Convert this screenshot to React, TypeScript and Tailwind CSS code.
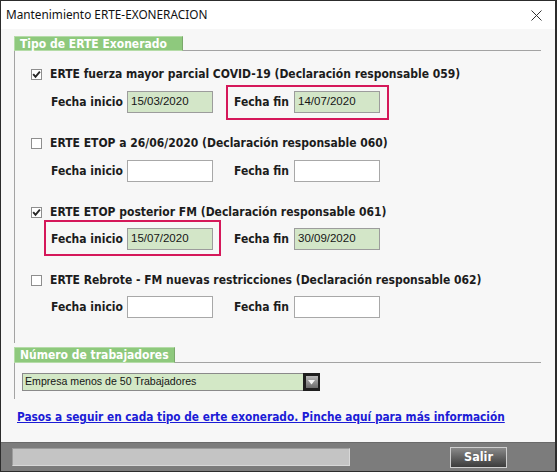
import React from "react";

const BOLD =
  "font-['DejaVu_Sans_Condensed','Liberation_Sans',sans-serif] font-bold text-[12px] text-[#1c1c1c] whitespace-nowrap";

function Check({ checked }: { checked: boolean }) {
  return (
    <span className="w-[11px] h-[11px] border border-[#8e8e8e] bg-white flex items-center justify-center shrink-0">
      {checked && (
        <svg width="9" height="9" viewBox="0 0 9 9">
          <path d="M1.2 4.1 L3.5 6.8 L7.9 1.6" stroke="#262626" strokeWidth="1.9" fill="none" />
        </svg>
      )}
    </span>
  );
}

function Field({ value }: { value?: string }) {
  return (
    <div
      className={`w-[86px] h-[22px] border flex items-center pl-[3px] text-[11.5px] font-['Liberation_Sans',sans-serif] text-[#151515] ${
        value ? "bg-[#d3e6c8] border-[#9c9c9c]" : "bg-white border-[#a8a8a8]"
      }`}
    >
      {value}
    </div>
  );
}

function Block({
  label,
  checked,
  ini,
  fin,
  hl,
  labelMt,
  fieldMt,
}: {
  label: string;
  checked: boolean;
  ini?: string;
  fin?: string;
  hl?: "ini" | "fin";
  labelMt: string;
  fieldMt: string;
}) {
  return (
    <div>
      <div className={`h-[16px] flex items-center pl-[16px] ${labelMt}`}>
        <Check checked={checked} />
        <span className={`ml-[8px] ${BOLD}`}>{label}</span>
      </div>
      <div className={`h-[22px] flex items-center pl-[36px] ${fieldMt}`}>
        <div className="relative flex items-center">
          {hl === "ini" && (
            <div className="absolute -left-[7px] -right-[8px] -top-[8px] -bottom-[6px] border-2 border-[#d5185a]" />
          )}
          <span className={`w-[76px] ${BOLD}`}>Fecha inicio</span>
          <Field value={ini} />
        </div>
        <div className="relative flex items-center ml-[21px]">
          {hl === "fin" && (
            <div className="absolute -left-[8px] -right-[9px] -top-[6px] -bottom-[7px] border-2 border-[#d5185a]" />
          )}
          <span className={`w-[60px] ${BOLD}`}>Fecha fin</span>
          <Field value={fin} />
        </div>
      </div>
    </div>
  );
}

function Tab({ text, w, h }: { text: string; w: string; h: string }) {
  return (
    <div
      className={`relative z-10 ${w} ${h} bg-[#8ec97d] border border-[#b5dca8] border-r-[#7aa86b] flex items-center pl-[5px] font-['DejaVu_Sans_Condensed','Liberation_Sans',sans-serif] font-bold text-[12px] text-white whitespace-nowrap`}
    >
      {text}
    </div>
  );
}

export default function App() {
  return (
    <div className="w-[557px] h-[472px] flex flex-col border-t border-l border-b border-r-2 border-[#2c2c2c] bg-[#f7f7f7] overflow-hidden">
      {/* title bar */}
      <div className="h-[28px] bg-white flex items-center justify-between pl-[5px] pr-[13px]">
        <span className="font-['Noto_Sans',sans-serif] text-[11.8px] text-[#111]">
          Mantenimiento ERTE-EXONERACION
        </span>
        <svg width="11" height="11" viewBox="0 0 11 11">
          <path d="M0.5 0.5 L10.5 10.5 M10.5 0.5 L0.5 10.5" stroke="#333" strokeWidth="1" />
        </svg>
      </div>

      {/* body */}
      <div className="flex-1 flex flex-col pl-[13px] pr-[14px]">
        <div className="mt-[7px]">
          <Tab text="Tipo de ERTE Exonerado" w="w-[169px]" h="h-[15px]" />
          <div className="-mt-[1px] border-t border-l border-[#a3a3a3] pb-[25px]">
            <Block
              label="ERTE fuerza mayor parcial COVID-19 (Declaración responsable 059)"
              checked
              ini="15/03/2020"
              fin="14/07/2020"
              hl="fin"
              labelMt="mt-[15px]"
              fieldMt="mt-[9px]"
            />
            <Block
              label="ERTE ETOP a 26/06/2020 (Declaración responsable 060)"
              checked={false}
              labelMt="mt-[22px]"
              fieldMt="mt-[9px]"
            />
            <Block
              label="ERTE ETOP posterior FM (Declaración responsable 061)"
              checked
              ini="15/07/2020"
              fin="30/09/2020"
              hl="ini"
              labelMt="mt-[22px]"
              fieldMt="mt-[8px]"
            />
            <Block
              label="ERTE Rebrote - FM nuevas restricciones (Declaración responsable 062)"
              checked={false}
              labelMt="mt-[22px]"
              fieldMt="mt-[8px]"
            />
          </div>
        </div>

        <div className="mt-[4px]">
          <Tab text="Número de trabajadores" w="w-[161px]" h="h-[16px]" />
          <div className="-mt-[1px] border-t border-l border-[#a3a3a3] pb-[8px] pl-[7px] pt-[10px]">
            <div className="w-[298px] h-[18px] bg-[#d3e8c6] border border-[#8a8a8a] border-r-0 flex items-center">
              <span className="flex-1 pl-[2px] font-['Liberation_Sans',sans-serif] text-[10.6px] text-[#151515] whitespace-nowrap">
                Empresa menos de 50 Trabajadores
              </span>
              <div className="w-[17px] h-[18px] bg-[#1e1e1e] flex items-center justify-center">
                <div className="w-[12px] h-[12px] bg-gradient-to-b from-[#b8b8b8] to-[#6c6c6c] flex items-center justify-center">
                  <svg width="7" height="5" viewBox="0 0 7 5">
                    <path d="M0 0 L7 0 L3.5 4.5 Z" fill="#f4f4f4" />
                  </svg>
                </div>
              </div>
            </div>
          </div>
        </div>

        <div className="mt-[11px] h-[16px] flex items-center pl-[3px]">
          <span className="font-['DejaVu_Sans_Condensed','Liberation_Sans',sans-serif] font-bold text-[11.75px] text-[#1b1bd6] underline whitespace-nowrap">
            Pasos a seguir en cada tipo de erte exonerado. Pinche aquí para más información
          </span>
        </div>
      </div>

      {/* bottom bar */}
      <div className="h-[29px] bg-[#7c7c7c] border-t border-[#6a6a6a] flex items-center pl-[11px] pr-[48px] justify-between">
        <div className="w-[338px] h-[18px] bg-[#c4c4c4] border border-t-[#9c9c9c] border-l-[#9c9c9c] border-b-[#d8d8d8] border-r-[#d8d8d8]" />
        <div className="w-[57px] h-[21px] border border-[#cfcfcf] bg-gradient-to-b from-[#8a8a8a] to-[#3c3c3c] flex items-center justify-center font-['DejaVu_Sans_Condensed','Liberation_Sans',sans-serif] font-bold text-[12.5px] text-white">
          Salir
        </div>
      </div>
    </div>
  );
}
